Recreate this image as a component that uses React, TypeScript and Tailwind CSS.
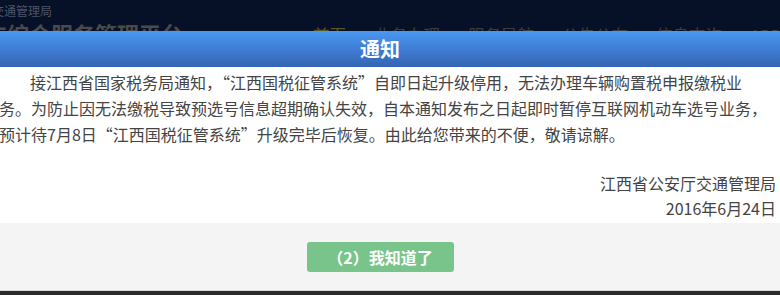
const NAV = [
  { label: "首页", active: true },
  { label: "业务办理" },
  { label: "服务导航" },
  { label: "公告公布" },
  { label: "信息查询" },
  { label: "APP下载" },
];

const FONT = "font-['Microsoft_YaHei','Noto_Sans_CJK_SC',sans-serif]";

export default function App() {
  return (
    <div className={`relative h-[295px] w-[780px] overflow-hidden bg-[#2b2b2b] ${FONT}`}>
      {/* page header, dimmed behind the dialog */}
      <header className="h-[60px] overflow-hidden bg-[#061027]">
        <div className="ml-[-80px] whitespace-nowrap pt-[3px] text-[12px] leading-[16px] text-[#4d5566]">
          江西省公安厅交通管理局
        </div>
        <div className="flex items-start whitespace-nowrap">
          <span className="ml-[-59px] text-[22px] font-bold leading-[28px] text-[#4a4a4a]">
            机动车综合服务管理平台
          </span>
          <nav className="ml-[130px] mt-[2px] flex gap-[28px] text-[16.5px] leading-[28px]">
            {NAV.map((item) => (
              <span
                key={item.label}
                className={item.active ? "text-[#5a5420]" : "text-[#3b3d42]"}
              >
                {item.label}
              </span>
            ))}
          </nav>
        </div>
      </header>

      {/* dialog */}
      <div className="absolute left-0 top-[31px] w-[780px] border-b border-[#d9d9d9]">
        <div className="flex h-[36px] items-center justify-center bg-gradient-to-b from-[#4a98f3] to-[#3464b4] pr-5 text-[20px] font-bold text-white">
          通知
        </div>
        <div className="bg-white pb-[2px] pt-[2px] text-[16px] text-[#444]">
          <p className="ml-[-1px] whitespace-nowrap indent-[31px] leading-[26px]">
            接江西省国家税务局通知，“江西国税征管系统”自即日起升级停用，无法办理车辆购置税申报缴税业
            <br />
            务。为防止因无法缴税导致预选号信息超期确认失效，自本通知发布之日起即时暂停互联网机动车选号业务，
            <br />
            预计待7月8日“江西国税征管系统”升级完毕后恢复。由此给您带来的不便，敬请谅解。
          </p>
          <div className="mt-[24px] pr-[4px] text-right leading-[25px]">
            <div>江西省公安厅交通管理局</div>
            <div>2016年6月24日</div>
          </div>
        </div>
        <div className="flex h-[67px] justify-center bg-[#f4f4f4] pr-5 pt-[19px]">
          <button className="h-[30px] w-[147px] rounded-[3px] bg-[#79c48a] text-[16px] font-bold text-white">
            （2）我知道了
          </button>
        </div>
      </div>
    </div>
  );
}
